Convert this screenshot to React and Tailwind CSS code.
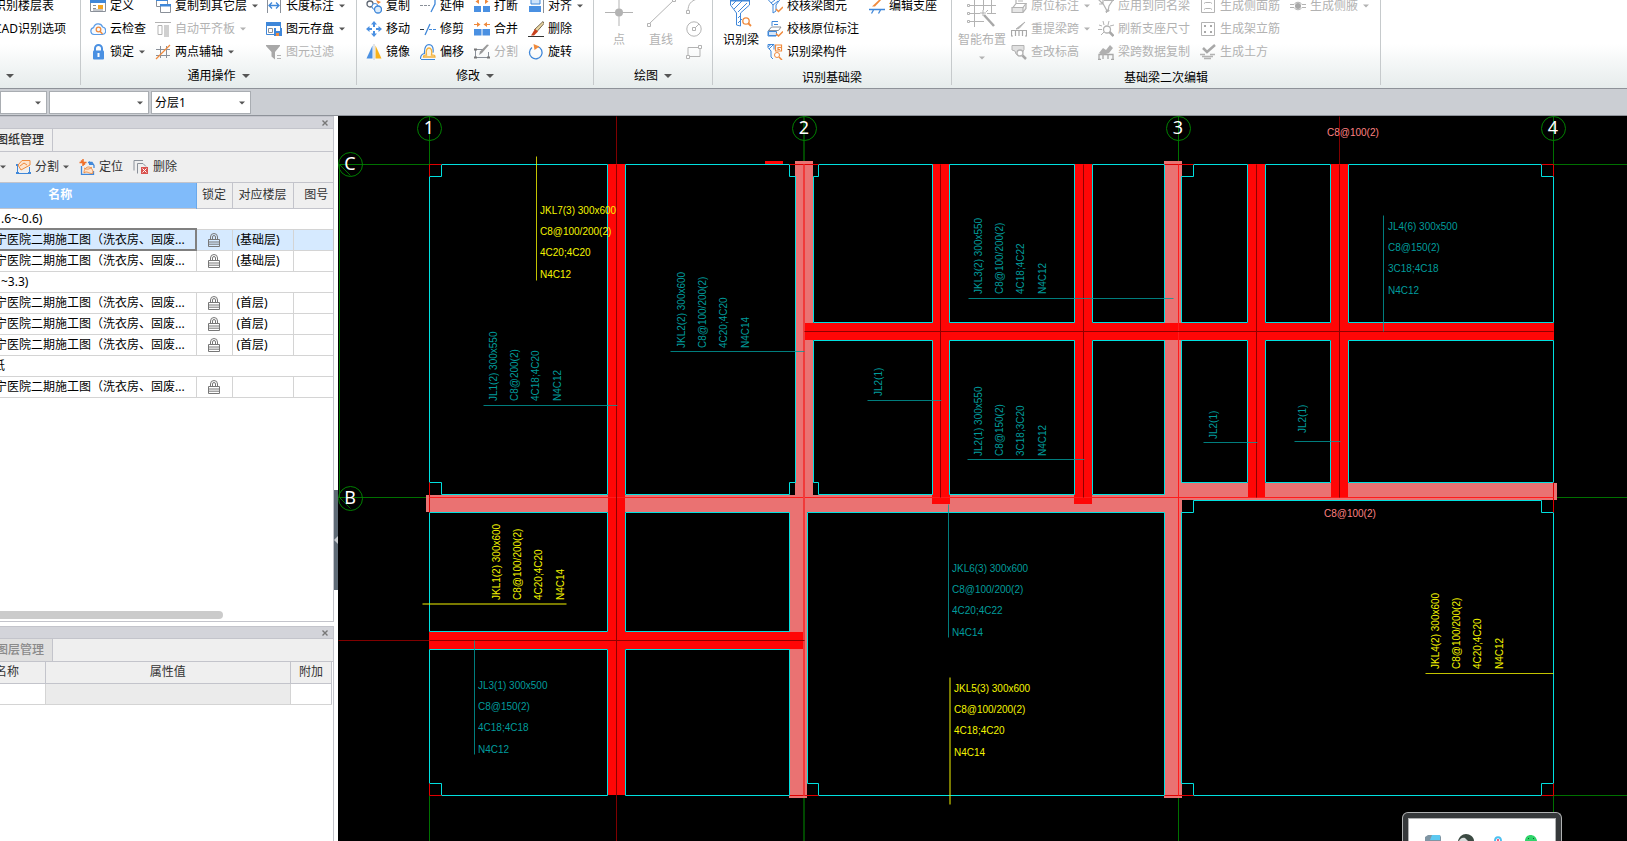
import React from 'react';
import clsx from 'clsx';

const BLUE = '#3f87d9';
const ORANGE = '#f08a3c';
const GRAY = '#b3b3b3';
const SLATE = '#8a9099';

/* ---------- icons ---------- */

const ICONS = {
  define: (
    <>
      <path d="M.5 1.5h15v12H.5z" fill="#fff" stroke={SLATE} />
      <path d="M0 1h16v4H0z" fill={BLUE} />
      <path d="M8 7h5v4H8z" fill="#f5a623" />
      <path d="M3 7.5h3M3 10.5h3M3 12h10" stroke={SLATE} />
    </>
  ),
  cloud: (
    <>
      <path d="M4 13.5a3.5 3.5 0 0 1-.4-6.9A4.7 4.7 0 0 1 12.6 6 3.8 3.8 0 0 1 12.5 13.5z" fill="#f5faff" stroke="#5a9be6" strokeWidth="1.2" />
      <circle cx="8.5" cy="8.5" r="2.3" fill="none" stroke={ORANGE} strokeWidth="1.3" />
      <path d="M10 10.3l2.5 2.7" stroke={ORANGE} strokeWidth="1.5" />
    </>
  ),
  lock: (
    <>
      <path d="M5 7V4.5a3.5 3.5 0 0 1 7 0V7" fill="none" stroke="#4a90e2" strokeWidth="2" />
      <rect x="3" y="6.5" width="11" height="9" rx="1" fill="#4a90e2" />
      <path d="M8.5 9v4" stroke="#fff" strokeWidth="2" />
    </>
  ),
  copyLayer: (
    <>
      <path d="M1.5 1.5h11v7h-11z" fill="#fff" stroke={SLATE} />
      <path d="M1 1h12v2H1z" fill={BLUE} />
      <path d="M5.5 6.5h10v8h-10z" fill="#fff" stroke={SLATE} />
      <path d="M5 6h11v2.500H5z" fill={BLUE} />
    </>
  ),
  flatSlab: (
    <>
      <path d="M0 1.5h16" stroke={GRAY} />
      <path d="M3 4.5h4v9H3z" fill="none" stroke={GRAY} />
      <path d="M9 4h5v12H9z" fill="#d0d0d0" />
    </>
  ),
  auxAxis: (
    <>
      <path d="M5.5 2v12M11.5 2v12M1 5.5h14M1 11.5h14" stroke={SLATE} />
      <path d="M1 15L15 1" stroke={ORANGE} strokeWidth="1.3" />
    </>
  ),
  length: (
    <>
      <path d="M1.5 0v15M14.5 0v15" stroke={SLATE} />
      <path d="M3 7.5h10M6 4.5l-3 3 3 3M10 4.5l3 3-3 3" fill="none" stroke={BLUE} strokeWidth="1.3" />
    </>
  ),
  store: (
    <>
      <path d="M.5 2.5h14v11H.5z" fill="#fff" stroke={BLUE} />
      <path d="M0 1h15v4H0z" fill={BLUE} />
      <path d="M2.5 7.5h4v4h-4z" fill="none" stroke={SLATE} />
      <path d="M8 7h8v8H8z" fill={BLUE} />
      <path d="M10 7h4v3h-4z" fill="#fff" />
      <path d="M10 12h3v3h-3z" fill={ORANGE} />
    </>
  ),
  filter: (
    <>
      <path d="M0 1h14v1L9 8v7.500L5.500 12.500V8L0 2z" fill="#a8a8a8" />
      <path d="M11 11.5h4M11 14.5h4" stroke={GRAY} />
    </>
  ),
  copy: (
    <>
      <circle cx="4" cy="6" r="3" fill="#fff" stroke="#5b6470" strokeWidth="1.3" />
      <circle cx="9" cy="8.5" r="3" fill="#fff" stroke={BLUE} />
      <circle cx="12" cy="11.5" r="3.5" fill="#dcecfb" stroke={BLUE} strokeWidth="1.3" />
      <path d="M10 2l5 2-3 2" fill={ORANGE} />
    </>
  ),
  move: (
    <path d="M8 0l3 3.500H9V6H7V3.500H5zM8 16l3-3.500H9V10H7v2.500H5zM0 8l3.500-3v2H6v2H3.500v2zM16 8l-3.500-3v2H10v2h2.500v2z" fill="#4a90e2" />
  ),
  mirror: (
    <>
      <path d="M6.5 1.5v13H.5z" fill="#4a90e2" />
      <path d="M9.5 1.5v13h6z" fill="#f7b21b" />
      <path d="M8 0v16" stroke="#c8ccd2" />
    </>
  ),
  extend: (
    <>
      <path d="M0 7.5h10" stroke={SLATE} strokeDasharray="3 1" />
      <path d="M15 0v6l-4 8" fill="none" stroke={BLUE} strokeWidth="1.3" />
    </>
  ),
  trim: (
    <>
      <path d="M0 8.5h4" stroke="#2b3a4a" />
      <path d="M10 3L5 14" stroke={BLUE} strokeWidth="1.3" />
      <path d="M9 8.5h7" stroke={BLUE} strokeDasharray="3 1" />
    </>
  ),
  offset: (
    <>
      <path d="M1 15.5h14M.5 15c0-3 .5-5 4-5.500C4 2 7 .7 9 .7s5 1.300 4 8" fill="none" stroke={BLUE} strokeWidth="1.2" />
      <path d="M3.5 13c0-2 1-2 3-2C5.500 6.500 7 4 9 4s3.500 2.500 2.500 7c2.500 0 3.500 0 3.500 2z" fill="#fff4dd" stroke="#f2b13c" strokeWidth="1.3" />
    </>
  ),
  breakBar: (
    <>
      <path d="M0 8h7v6H0zM9 8h7v6H9z" fill="#4a90e2" />
      <path d="M5 1L1.500 3.500 5 6zM11 1l3.500 2.500L11 6z" fill={ORANGE} />
    </>
  ),
  merge: (
    <>
      <path d="M0 8h7.500v6.500H0zM8.500 8H16v6.500H8.500z" fill="#4a90e2" />
      <path d="M3 1l3.500 2.500L3 6zM13 1L9.500 3.500 13 6zM0 3h3v1H0zM13 3h3v1h-3z" fill={ORANGE} />
    </>
  ),
  split: (
    <>
      <path d="M1.5 5.5h8M1.5 5v8.500h13V8" fill="none" stroke={SLATE} />
      <path d="M0 5.5h3M0 13.5h3M13 13.5h3" stroke="#777" strokeWidth="2" />
      <path d="M15 1L8 9l-3 2 1-3.500L13 .5z" fill="#9a9a9a" />
    </>
  ),
  align: (
    <>
      <path d="M3 1h9v5H3z" fill="#cfe3fa" stroke={BLUE} />
      <path d="M1 8h12v6H1z" fill="#4a90e2" />
      <path d="M15.5 0v15" stroke={SLATE} />
    </>
  ),
  erase: (
    <>
      <path d="M0 15.5h16" stroke="#333" />
      <path d="M15 .5l1 2-7 8-2.500-2z" fill="#e9d5a0" stroke="#5a4a32" strokeWidth=".8" />
      <path d="M7 8l3 2.500-4 4H3z" fill="#c8401c" />
    </>
  ),
  rotate: (
    <>
      <path d="M9.5 2.5a6.3 6.3 0 1 1-5.500 1" fill="none" stroke={BLUE} strokeWidth="1.3" />
      <path d="M5.5 0l6 2.500-5 3.500z" fill={ORANGE} />
    </>
  ),
  checkBeam: (
    <>
      <path d="M1 1.5h12L9 7v6l-3 2V7z" fill="#fff" stroke={BLUE} />
      <path d="M4 5l4-3M6 7l5-4" stroke={BLUE} />
      <path d="M9 11l2.500 2.500L16 9" fill="none" stroke={ORANGE} strokeWidth="1.5" />
    </>
  ),
  checkLabel: (
    <>
      <path d="M5 5V.5h6M7 3.5h4M5 6l-4 4v5h8" fill="none" stroke={BLUE} />
      <path d="M1.5 9.5h10L14 6H4.500z" fill="#fff" stroke={SLATE} />
      <path d="M1.5 10.5h8v4h-8z" fill="#d8e8fb" stroke={BLUE} />
      <path d="M9 12.5l2.500 2.500L16 10.500" fill="none" stroke={ORANGE} strokeWidth="1.5" />
    </>
  ),
  recogPart: (
    <>
      <path d="M1 .5h6v5M1 .5v3l3 3.500v6l2 2" fill="none" stroke={BLUE} />
      <path d="M1 3l3-2.500M2 5l4-4" stroke={BLUE} />
      <path d="M8.5 1v6h6V1zM14 3.5h-3v2h2" fill="none" stroke={ORANGE} strokeWidth="1.2" />
      <circle cx="10" cy="11" r="2.5" fill="#fff" stroke={ORANGE} />
      <path d="M12 13l3 3" stroke={ORANGE} strokeWidth="1.5" />
    </>
  ),
  support: (
    <>
      <path d="M0 11.5h16M4.5 12l-2 3.500M11.5 12l-2 3.500" stroke={BLUE} strokeWidth="1.3" />
      <path d="M14 0L6 8.500H3L12 0z" fill={ORANGE} />
    </>
  ),
  printer: (
    <>
      <path d="M5 5V.5h7M7 3h5M2 9.5h10l3-4H5z" fill="none" stroke={GRAY} strokeWidth="1.2" />
      <path d="M1 9.5h11v5H1zM12 14.5l3-4v-5" fill="#e6e6e6" stroke={GRAY} strokeWidth="1.2" />
    </>
  ),
  respan: (
    <>
      <path d="M.5 15V9.500h15V15M4.5 10v5M8 10v5M11.5 10v5M0 15h2M14 15h2" fill="none" stroke="#a8a8a8" strokeWidth="1.2" />
      <path d="M14 1L8 7.500 5 8z" fill={GRAY} stroke={GRAY} />
    </>
  ),
  height: (
    <>
      <path d="M1 1.5h12v4L11 9l-3 3-3-2-1-3-3-1z" fill="#e0e0e0" stroke={GRAY} />
      <circle cx="9" cy="9" r="3" fill="#fff" stroke={GRAY} strokeWidth="1.3" />
      <path d="M11.5 11.5l3.500 3.500" stroke="#a8a8a8" strokeWidth="2.5" />
    </>
  ),
  applyBeam: (
    <>
      <path d="M0 1l5 5M5 2v4H1M5 5.5L8.500 12V15M15 2l-4 6-1 5-2-1M6 2.5h10" fill="none" stroke={GRAY} strokeWidth="1.2" />
      <path d="M7 14l3-3 2 2z" fill={GRAY} />
    </>
  ),
  refresh: (
    <>
      <circle cx="9" cy="8.5" r="3.5" fill="#fff" stroke={GRAY} strokeWidth="1.3" />
      <path d="M11.5 11l4 4" stroke="#a8a8a8" strokeWidth="2.5" />
      <path d="M5 0l1 4M11 0l-1 4M0 8.5h4M3 14l3-3M12 5l4-1M1 4l3 1" stroke={GRAY} />
    </>
  ),
  spanCopy: (
    <>
      <path d="M1 15.5V10.500h14v5M5 11v4M10 11v4M0 15.5h3M13 15.5h3" fill="none" stroke="#a8a8a8" strokeWidth="1.3" />
      <path d="M1 9l4-5 3 2 4-5 3 3-4 5-3 1-4 1z" fill="#b0b0b0" />
    </>
  ),
  sideBar: (
    <>
      <path d="M1.5 1.5h13v13h-13z" fill="none" stroke={GRAY} />
      <path d="M4 5.5l1.500-1h5l1.500 1M4 11.5l1.500-1h5l1.500 1" fill="none" stroke={GRAY} />
    </>
  ),
  frameBar: (
    <>
      <path d="M1.5 1.5h13v13h-13z" fill="none" stroke={GRAY} />
      <path d="M4 4h2v2H4zM10 4h2v2h-2zM4 10h2v2H4zM10 10h2v2h-2z" fill="#a8a8a8" />
    </>
  ),
  earth: (
    <>
      <path d="M3 4l4 4 8-7" fill="none" stroke="#a8a8a8" strokeWidth="2.5" />
      <path d="M0 10.5h5M10 10.5h5M2 12.5h11M4 14.5h7" stroke={GRAY} strokeWidth="1.3" />
    </>
  ),
  haunch: (
    <>
      <path d="M0 6.5h4M12 6.5h4M0 9.5h4M12 9.5h4M4 6.5c2-3 6-3 8 0M4 9.5c2 3 6 3 8 0" fill="none" stroke={GRAY} />
      <circle cx="8" cy="8" r="3" fill="#a8a8a8" />
    </>
  ),
  drawingSplit: (
    <>
      <path d="M2.5 5v9.500h12V8" fill="none" stroke={BLUE} />
      <path d="M1 5h3v2H1zM1 13h3v2H1zM13 13h3v2h-3z" fill={BLUE} />
      <path d="M3 6l4-4.500h8V6L6 11zM5 7l4-3 3 2" fill="#fde3cd" stroke={ORANGE} />
    </>
  ),
  locate: (
    <>
      <path d="M9 3.5h4l2 3V9M2.5 7v8.500h12V12" fill="none" stroke={BLUE} strokeWidth="1.3" />
      <path d="M10 2l5 4h-5z" fill={BLUE} />
      <path d="M4 0v7M.5 3.5h7M2 1.5l4 4" stroke="#f0702a" strokeWidth="1.5" />
      <path d="M5 14c0-8 9-8 9 0-3 2-6-3-9 0zM5 9c3 2 6 1 8-1" fill="#fde3cd" stroke={ORANGE} />
    </>
  ),
  remove: (
    <>
      <path d="M1 11.5V1.500h9M4.5 14.5V4.500H10l3 3" fill="none" stroke={SLATE} />
      <path d="M8 8h7v7H8z" fill="#d9534f" />
      <path d="M9.5 9.5l4 4M13.5 9.5l-4 4" stroke="#fff" />
    </>
  ),
};

function Icon({ name }) {
  return (
    <svg viewBox="0 0 16 16" className="h-4 w-4 shrink-0" aria-hidden="true">
      {ICONS[name]}
    </svg>
  );
}

function Caret({ className = 'text-[#555]', big = false }) {
  return (
    <svg viewBox="0 0 8 4" className={clsx('h-1 shrink-0', big ? 'w-2' : 'w-1.5', className)} aria-hidden="true">
      <path d="M0 0h8L4 4z" fill="currentColor" />
    </svg>
  );
}

function PadlockIcon() {
  return (
    <svg viewBox="0 0 12 14" className="mx-auto h-3.5 w-3" role="img" aria-label="locked">
      <path d="M2.5 6V4a3.5 3.5 0 0 1 7 0v2M4.5 6V4a1.5 1.5 0 0 1 3 0v2" fill="none" stroke="#777" />
      <path d="M.5 6.5h11v7H.5zM1 9h10M1 11.2h10" fill="none" stroke="#777" />
    </svg>
  );
}

/* ---------- ribbon ---------- */

function Tool({ icon, label, caret, off }) {
  return (
    <button
      type="button"
      disabled={off}
      className={clsx('flex h-[23px] items-center gap-1 whitespace-nowrap', off ? 'text-[#b2b2b2]' : 'text-black')}
    >
      {icon && <Icon name={icon} />}
      {label}
      {caret && <span className="pl-px"><Caret className={off ? 'text-[#b2b2b2]' : 'text-[#555]'} /></span>}
    </button>
  );
}

function ToolColumn({ tools, className }) {
  return (
    <div className={clsx('flex shrink-0 flex-col', className)}>
      {tools.map((t) => <Tool key={t.label} {...t} />)}
    </div>
  );
}

function BigTool({ label, off, caret, className, children }) {
  return (
    <button
      type="button"
      disabled={off}
      className={clsx('flex h-[69px] shrink-0 flex-col items-center gap-1 whitespace-nowrap pt-1', off ? 'text-[#b2b2b2]' : 'text-black', className)}
    >
      <svg viewBox="0 0 30 30" className="h-[30px] w-[30px] shrink-0" aria-hidden="true">{children}</svg>
      <span className="leading-4">{label}</span>
      {caret && <Caret className="mt-1 text-[#b2b2b2]" />}
    </button>
  );
}

function Group({ title, caret, className, children }) {
  return (
    <section className="flex shrink-0">
      <div className={clsx('flex flex-col', className)}>
        <div className="-mt-1.5 flex">{children}</div>
        <h2 className={clsx('flex h-[25px] items-center justify-center gap-1.5 whitespace-nowrap', !caret && 'pt-1')}>
          {title}
          {caret && <Caret big />}
        </h2>
      </div>
      <div className="h-[85px] w-px bg-[#c6cacc]" />
    </section>
  );
}

function Ribbon() {
  return (
    <header className="flex h-[89px] shrink-0 overflow-hidden border-b border-[#8e9299] bg-linear-to-b from-white from-50% to-[#e6ecec]">
      <Group className="w-20">
        <div className="flex w-20 flex-col">
          <div className="-ml-1.5"><Tool label="识别楼层表" /></div>
          <div className="-ml-1.5"><Tool label="CAD识别选项" /></div>
          <div className="h-[23px]" />
          <div className="-ml-3 flex h-[25px] items-center gap-1.5">作<Caret big /></div>
        </div>
      </Group>

      <Group title="通用操作" caret className="w-[275px]">
        <ToolColumn
          className="ml-[9px] w-[65px]"
          tools={[
            { icon: 'define', label: '定义' },
            { icon: 'cloud', label: '云检查' },
            { icon: 'lock', label: '锁定', caret: true },
          ]}
        />
        <ToolColumn
          className="w-[111px]"
          tools={[
            { icon: 'copyLayer', label: '复制到其它层', caret: true },
            { icon: 'flatSlab', label: '自动平齐板', caret: true, off: true },
            { icon: 'auxAxis', label: '两点辅轴', caret: true },
          ]}
        />
        <ToolColumn
          tools={[
            { icon: 'length', label: '长度标注', caret: true },
            { icon: 'store', label: '图元存盘', caret: true },
            { icon: 'filter', label: '图元过滤', off: true },
          ]}
        />
      </Group>

      <Group title="修改" caret className="w-[236px]">
        <ToolColumn
          className="ml-[9px] w-[54px]"
          tools={[
            { icon: 'copy', label: '复制' },
            { icon: 'move', label: '移动' },
            { icon: 'mirror', label: '镜像' },
          ]}
        />
        <ToolColumn
          className="w-[54px]"
          tools={[
            { icon: 'extend', label: '延伸' },
            { icon: 'trim', label: '修剪' },
            { icon: 'offset', label: '偏移' },
          ]}
        />
        <ToolColumn
          className="w-[54px]"
          tools={[
            { icon: 'breakBar', label: '打断' },
            { icon: 'merge', label: '合并' },
            { icon: 'split', label: '分割', off: true },
          ]}
        />
        <ToolColumn
          tools={[
            { icon: 'align', label: '对齐', caret: true },
            { icon: 'erase', label: '删除' },
            { icon: 'rotate', label: '旋转' },
          ]}
        />
      </Group>

      <Group title="绘图" caret className="w-[118px]">
        <BigTool label="点" off className="ml-2.5 w-[30px]">
          <path d="M15 0v28M1 14.5h28" stroke={GRAY} />
          <circle cx="15" cy="14.5" r="4" fill={GRAY} />
        </BigTool>
        <BigTool label="直线" off className="ml-2.5 w-[34px]">
          <path d="M3 26L28 2" stroke={GRAY} />
          <path d="M1.5 25.5h3v3h-3zM26.5.5h3v3h-3z" fill="#fff" stroke={GRAY} />
        </BigTool>
        <div className="ml-2 flex w-4 flex-col">
          <button type="button" disabled aria-label="arc" className="flex h-[23px] items-center">
            <svg viewBox="0 0 16 16" className="h-4 w-4">
              <path d="M2 13C2 6 5 3 11 1" fill="none" stroke={GRAY} />
              <path d="M.5 12.5h3v3h-3z" fill="#fff" stroke={GRAY} />
            </svg>
          </button>
          <button type="button" disabled aria-label="circle" className="flex h-[23px] items-center">
            <svg viewBox="0 0 16 16" className="h-4 w-4">
              <circle cx="8" cy="8" r="7.2" fill="none" stroke={GRAY} />
              <path d="M8 8l5-5" stroke={GRAY} />
              <path d="M6.5 6.5h3v3h-3z" fill="#fff" stroke={GRAY} />
            </svg>
          </button>
          <button type="button" disabled aria-label="rectangle" className="flex h-[23px] items-center">
            <svg viewBox="0 0 16 16" className="h-4 w-4">
              <path d="M2 3.5h12v9H2z" fill="none" stroke={GRAY} />
              <path d="M.5 11.5h3v3h-3zM12.5 1.5h3v3h-3z" fill="#fff" stroke={GRAY} />
            </svg>
          </button>
        </div>
      </Group>

      <Group title="识别基础梁" className="w-[238px]">
        <BigTool label="识别梁" className="ml-2.5 w-9">
          <path d="M4.5 3v4l6 8v12l4 1V15l9-8V3z" fill="#fff" stroke={BLUE} />
          <path d="M4 2.5h20M6 7l4-4M8 11l8-8M12 14l9-9M12 20l3-3M12 25l4-4" stroke={BLUE} />
          <circle cx="20" cy="23" r="3.2" fill="#fff" stroke={ORANGE} strokeWidth="1.3" />
          <path d="M22 25l3 3" stroke={ORANGE} strokeWidth="1.8" />
        </BigTool>
        <ToolColumn
          className="ml-2 w-[102px]"
          tools={[
            { icon: 'checkBeam', label: '校核梁图元' },
            { icon: 'checkLabel', label: '校核原位标注' },
            { icon: 'recogPart', label: '识别梁构件' },
          ]}
        />
        <ToolColumn tools={[{ icon: 'support', label: '编辑支座' }]} />
      </Group>

      <Group title="基础梁二次编辑" className="w-[428px]">
        <BigTool label="智能布置" off caret className="ml-1.5 w-12">
          <path d="M7.5 2v22M16.5 0v12M24.5 0v16M1 7.5h28M1 15.5h12M20 15.5h9M1 23.5h16M7.5 24v5" stroke={GRAY} />
          <path d="M17 17l10 11" stroke="#a8a8a8" strokeWidth="2.5" />
          <path d="M16 12v6M13 15h6M21 12l-2 2" stroke={GRAY} />
          <path d="M.5 6.5h2v2h-2zM.5 14.5h2v2h-2zM.5 22.5h2v2h-2z" fill="#fff" stroke={GRAY} />
        </BigTool>
        <ToolColumn
          className="ml-[5px] w-[87px]"
          tools={[
            { icon: 'printer', label: '原位标注', caret: true, off: true },
            { icon: 'respan', label: '重提梁跨', caret: true, off: true },
            { icon: 'height', label: '查改标高', off: true },
          ]}
        />
        <ToolColumn
          className="w-[102px]"
          tools={[
            { icon: 'applyBeam', label: '应用到同名梁', off: true },
            { icon: 'refresh', label: '刷新支座尺寸', off: true },
            { icon: 'spanCopy', label: '梁跨数据复制', off: true },
          ]}
        />
        <ToolColumn
          className="w-[90px]"
          tools={[
            { icon: 'sideBar', label: '生成侧面筋', off: true },
            { icon: 'frameBar', label: '生成架立筋', off: true },
            { icon: 'earth', label: '生成土方', off: true },
          ]}
        />
        <ToolColumn tools={[{ icon: 'haunch', label: '生成侧腋', caret: true, off: true }]} />
      </Group>
    </header>
  );
}

function Combo({ label, value, className }) {
  return (
    <label className={clsx('relative block h-[23px]', className)}>
      <select aria-label={label} defaultValue={value} className="h-full w-full appearance-none border border-[#a9adb2] bg-white pl-[3px] text-xs">
        <option value={value}>{value}</option>
      </select>
      <span className="pointer-events-none absolute inset-y-0 right-1.5 flex items-center"><Caret /></span>
    </label>
  );
}

/* ---------- left dock ---------- */

const DRAWING = '宁医院二期施工图（洗衣房、固废...';
const ROWS = [
  { group: '.6~-0.6)' },
  { floor: '(基础层)', selected: true },
  { floor: '(基础层)' },
  { group: '~3.3)' },
  { floor: '(首层)' },
  { floor: '(首层)' },
  { floor: '(首层)' },
  { group: '纸', shift: true },
  { floor: '' },
];

function DockTitle() {
  return (
    <div className="flex h-3 shrink-0 items-center justify-end border-b border-[#c3c4cb] bg-[#d3d4da] pr-[5px]">
      <button type="button" aria-label="close">
        <svg viewBox="0 0 6 6" className="h-1.5 w-1.5">
          <path d="M.5.5l5 5M5.5.5l-5 5" stroke="#777" strokeWidth="1.4" />
        </svg>
      </button>
    </div>
  );
}

function DrawingTable() {
  return (
    <table className="w-full table-fixed border-collapse">
      <colgroup>
        <col />
        <col className="w-9" />
        <col className="w-[61px]" />
        <col className="w-10" />
      </colgroup>
      <thead>
        <tr className="h-[25px] border-b border-[#c3c4cb] bg-[#efefef] text-[#333]">
          <th className="border-r border-[#6aa9ec] bg-[#80bbfa] pr-16 font-bold text-white">名称</th>
          <th className="border-r border-[#c3c4cb] font-normal">锁定</th>
          <th className="border-r border-[#c3c4cb] font-normal">对应楼层</th>
          <th className="pl-1.5 font-normal">图号</th>
        </tr>
      </thead>
      <tbody>
        {ROWS.map((row, i) =>
          row.group ? (
            <tr key={i} className="h-[21px] border-b border-[#d4d4d4]">
              <td colSpan={4} className={row.shift ? 'pl-1' : 'pl-3'}>{row.group}</td>
            </tr>
          ) : (
            <tr key={i} className={clsx('h-[21px] border-b border-[#d4d4d4]', row.selected && 'bg-[#d6eaff]')}>
              <td className={clsx('overflow-hidden border-r border-[#d4d4d4] pl-1.5 whitespace-nowrap', row.selected && 'outline-2 -outline-offset-1 outline-[#808080]')}>
                {DRAWING}
              </td>
              <td className="border-r border-[#d4d4d4]"><PadlockIcon /></td>
              <td className="border-r border-[#d4d4d4] pl-1">{row.floor}</td>
              <td />
            </tr>
          )
        )}
      </tbody>
    </table>
  );
}

function LeftDock() {
  return (
    <aside className="-ml-3 flex w-[346px] shrink-0 flex-col text-xs leading-4">
      <section className="flex min-h-0 flex-1 flex-col border border-[#c3c4cb] bg-white">
        <DockTitle />
        <div className="flex h-[23px] shrink-0 border-b border-[#c3c4cb] bg-[#efefef]">
          <button type="button" className="w-16 border-r border-[#c3c4cb] pl-[7px] text-left font-medium whitespace-nowrap text-[#333]">图纸管理</button>
        </div>
        <div className="flex h-[31px] shrink-0 items-center border-b border-[#c3c4cb] bg-[#efefef] pl-[11px] text-[#333]">
          <button type="button" aria-label="more" className="w-[15px]"><Caret /></button>
          <button type="button" className="flex w-16 items-center gap-1"><Icon name="drawingSplit" />分割<Caret /></button>
          <button type="button" className="flex w-[54px] items-center gap-1"><Icon name="locate" />定位</button>
          <button type="button" className="flex items-center gap-1"><Icon name="remove" />删除</button>
        </div>
        <DrawingTable />
        <div className="mt-auto mb-0.5 h-2 w-[234px] rounded-r-full bg-[#cbcbcb]" />
      </section>

      <section className="mt-1 h-[215px] shrink-0 border border-b-0 border-[#c3c4cb] bg-white">
        <DockTitle />
        <div className="flex h-[23px] border-b border-[#c3c4cb] bg-[#efefef]">
          <button type="button" className="w-16 border-r border-[#c3c4cb] bg-[#e0e0e0] pl-[7px] text-left font-medium whitespace-nowrap text-[#8a8a8a]">图层管理</button>
        </div>
        <table className="w-[343px] table-fixed border-collapse border-r border-[#c3c4cb]">
          <thead>
            <tr className="h-[21px] border-b border-[#c3c4cb] bg-[#efefef] text-[#333]">
              <th className="w-14 border-r border-[#c3c4cb] pl-1.5 text-left font-normal">名称</th>
              <th className="border-r border-[#c3c4cb] font-normal">属性值</th>
              <th className="w-[41px] font-normal">附加</th>
            </tr>
          </thead>
          <tbody>
            <tr className="h-[21px] border-b border-[#d4d4d4]">
              <td className="border-r border-[#d4d4d4]" />
              <td className="border-r border-[#d4d4d4] bg-[#ebebeb]" />
              <td />
            </tr>
          </tbody>
        </table>
      </section>
    </aside>
  );
}

/* ---------- model view ---------- */

const CYAN = '#00e0e0';
const TEAL = '#009c9c';
const YELLOW = '#f4f400';
const PINK = '#ea7272';

// x, y, w, h
const PINK_BEAMS = [
  [426, 495, 756, 17],
  [1178, 483, 379, 17],
  [795, 161, 18, 334],
  [789, 512, 18, 286],
  [1164, 161, 18, 637],
];

const RED_BEAMS = [
  [608, 164, 17, 631],
  [429, 632, 375, 17],
  [804, 323, 750, 17],
  [932, 164, 18, 340],
  [1074, 164, 18, 340],
  [1248, 164, 17, 333],
  [1331, 164, 17, 333],
  [765, 161, 18, 3],
];

const ROOMS = [
  '441,164 607,164 607,494 441,494 441,482 429,482 429,176 441,176',
  '625,164 789,164 789,176 795,176 795,482 789,482 789,494 625,494',
  '818,164 932,164 932,322 813,322 813,176 818,176',
  '813,340 932,340 932,494 818,494 818,482 813,482',
  '949,164 1074,164 1074,322 949,322',
  '949,340 1074,340 1074,494 949,494',
  '1092,164 1164,164 1164,322 1092,322',
  '1092,340 1164,340 1164,494 1092,494',
  '1193,164 1247,164 1247,322 1181,322 1181,176 1193,176',
  '1181,340 1247,340 1247,482 1181,482',
  '1265,164 1330,164 1330,322 1265,322',
  '1265,340 1330,340 1330,482 1265,482',
  '1348,164 1541,164 1541,176 1553,176 1553,322 1348,322',
  '1348,340 1553,340 1553,482 1348,482',
  '429,512 607,512 607,631 429,631',
  '625,512 789,512 789,631 625,631',
  '429,649 607,649 607,795 441,795 441,783 429,783',
  '625,649 789,649 789,795 625,795',
  '807,512 1164,512 1164,795 818,795 818,783 807,783',
  '1193,500 1541,500 1541,512 1553,512 1553,783 1541,783 1541,795 1193,795 1193,783 1181,783 1181,512 1193,512',
];

const LINE_OFFSETS = [0, 21, 42, 64];

// x, y: centre line and start of the first text line
const NOTES = [
  { x: 540, y: 210, color: YELLOW, leader: 'M536 156V280', lines: ['JKL7(3) 300x600', 'C8@100/200(2)', '4C20;4C20', 'N4C12'] },
  { x: 1388, y: 226, color: TEAL, leader: 'M1383 215V331', lines: ['JL4(6) 300x500', 'C8@150(2)', '3C18;4C18', 'N4C12'] },
  { x: 478, y: 685, color: TEAL, leader: 'M474 640V754', lines: ['JL3(1) 300x500', 'C8@150(2)', '4C18;4C18', 'N4C12'] },
  { x: 952, y: 568, color: TEAL, leader: 'M948 504V637', lines: ['JKL6(3) 300x600', 'C8@100/200(2)', '4C20;4C22', 'N4C14'] },
  { x: 954, y: 688, color: YELLOW, wide: true, leader: 'M949.5 677V804', lines: ['JKL5(3) 300x600', 'C8@100/200(2)', '4C18;4C20', 'N4C14'] },
  { x: 1327, y: 132, color: '#ff8080', lines: ['C8@100(2)'] },
  { x: 1324, y: 513, color: '#ff8080', lines: ['C8@100(2)'] },
  { up: true, x: 493, y: 401, color: TEAL, leader: 'M483 405H617', lines: ['JL1(2) 300x550', 'C8@200(2)', '4C18;4C20', 'N4C12'] },
  { up: true, x: 681, y: 348, color: TEAL, leader: 'M670 351H804', lines: ['JKL2(2) 300x600', 'C8@100/200(2)', '4C20;4C20', 'N4C14'] },
  { up: true, x: 978, y: 294, color: TEAL, leader: 'M968 298H1173', lines: ['JKL3(2) 300x550', 'C8@100/200(2)', '4C18;4C22', 'N4C12'] },
  { up: true, x: 978, y: 456, color: TEAL, leader: 'M967 459H1084', lines: ['JL2(1) 300x550', 'C8@150(2)', '3C18;3C20', 'N4C12'] },
  { up: true, x: 878, y: 396, color: TEAL, leader: 'M867 400H941', lines: ['JL2(1)'] },
  { up: true, x: 1213, y: 439, color: TEAL, leader: 'M1203 442H1257', lines: ['JL2(1)'] },
  { up: true, x: 1302, y: 433, color: TEAL, leader: 'M1294 441H1340', lines: ['JL2(1)'] },
  { up: true, x: 496, y: 600, color: YELLOW, wide: true, leader: 'M422 603.5H566', lines: ['JKL1(2) 300x600', 'C8@100/200(2)', '4C20;4C20', 'N4C14'] },
  { up: true, x: 1435, y: 669, color: YELLOW, leader: 'M1425 673H1553', lines: ['JKL4(2) 300x600', 'C8@100/200(2)', '4C20;4C20', 'N4C12'] },
];

const AXES = [
  { name: '1', x: 429, y: 128 },
  { name: '2', x: 804, y: 128 },
  { name: '3', x: 1178, y: 128 },
  { name: '4', x: 1553, y: 128 },
  { name: 'C', x: 350, y: 164 },
  { name: 'B', x: 350, y: 498 },
];

function Note({ x, y, up, color, wide, leader, lines }) {
  return (
    <g>
      {leader && (
        <path
          d={leader}
          fill="none"
          stroke={color}
          strokeOpacity={wide ? 0.5 : 0.8}
          strokeWidth={wide ? 2 : 1}
          transform="translate(.5 .5)"
        />
      )}
      {lines.map((line, i) => {
        const tx = up ? x + LINE_OFFSETS[i] + 4 : x;
        const ty = up ? y : y + LINE_OFFSETS[i] + 4;
        return (
          <text
            key={i}
            x={tx}
            y={ty}
            fill={color}
            transform={up ? `rotate(-90 ${tx} ${ty})` : undefined}
            className="font-['Liberation_Sans',sans-serif] text-[10px]"
          >
            {line}
          </text>
        );
      })}
    </g>
  );
}

function ModelView() {
  return (
    <main className="relative min-w-0 flex-1 overflow-hidden bg-black">
      <svg viewBox="338 116 1289 725" width="1289" height="725" className="block max-w-none" role="img" aria-label="foundation beam plan">
        {/* axis grid */}
        <g fill="none" stroke="#007000" transform="translate(.5 .5)">
          <path d="M429 116V164M1178 116V164M1553 116V164M429 795V841M1178 795V841M1553 795V841M339 164V497M339 164L350 175M339 497L350 508" />
          <path d="M338 164H429M338 497H429M1553 164H1627M1553 497H1627M1553 795H1627" />
          <path d="M803.5 116V164M803.5 795V841" stroke="#004800" strokeWidth="2" />
          <path d="M616 116V164M616 795V841M1339 116V164M338 640H429" stroke="#800000" />
          {AXES.map((a) => <circle key={a.name} cx={a.x} cy={a.y} r="12" stroke="#008000" />)}
        </g>

        {/* beams */}
        <g shapeRendering="crispEdges">
          {PINK_BEAMS.map(([x, y, w, h]) => <rect key={`${x}-${y}`} x={x} y={y} width={w} height={h} fill={PINK} />)}
          {RED_BEAMS.map(([x, y, w, h]) => <rect key={`${x}-${y}`} x={x} y={y} width={w} height={h} fill="#ff0606" />)}
        </g>

        <g fill="none" transform="translate(.5 .5)">
          {ROOMS.map((pts) => <polygon key={pts} points={pts} stroke={CYAN} />)}
          {/* columns and centre lines */}
          <path d="M429 176V164H441M789 164H818M1164 164H1193M1541 164H1553V176M429 482V512M1553 482V512M429 783V795H441M789 795H818M1164 795H1193M1541 795H1553V783" stroke="#e00000" />
          <path d="M429 497H1553M1178 164V795" stroke="#ff1c1c" />
          <path d="M803.5 164V795" stroke="#f03a3a" strokeWidth="2" />
          <path d="M616 164V795M429 640H804M804 331H1553M940 164V497M1083 164V497M1256 164V497M1339 164V497" stroke="#900000" />
        </g>

        {NOTES.map((n) => <Note key={`${n.x}-${n.y}`} {...n} />)}

        {AXES.map((a) => (
          <text key={a.name} x={a.x} y={a.y + 6} textAnchor="middle" fill="#fff" className="font-['Noto_Sans',sans-serif] text-[18px]">
            {a.name}
          </text>
        ))}
      </svg>

      {/* tray flyout */}
      <div className="absolute right-[65px] bottom-0 h-[29px] w-40 rounded-t-md border border-b-0 border-[#b0b2b3] bg-[#36393b] px-[5px] pt-[5px]">
        <div className="flex h-full items-end justify-around border border-b-0 border-[#b0b2b3] bg-white px-2">
          <svg viewBox="0 0 16 6" className="h-1.5 w-4"><path d="M0 2l3-2h12l1 2v4H0z" fill="#7f95a3" /><path d="M7 0h8v5H5z" fill="#5cc8f0" /></svg>
          <svg viewBox="0 0 16 7" className="h-[7px] w-4"><path d="M0 7c1-4 4-7 8-7s8 3 8 7z" fill="#3b4a42" /><path d="M1 7c1-2 3-4 6-3l3 3z" fill="#d8dcdc" /></svg>
          <svg viewBox="0 0 16 6" className="h-1.5 w-4"><path d="M5 6c0-5 6-5 6 0" fill="none" stroke="#4cc0f0" strokeWidth="2" /><path d="M7 4h2v2H7z" fill="#f06080" /></svg>
          <svg viewBox="0 0 16 6" className="h-1.5 w-4"><path d="M2 6c0-8 11-8 12 0z" fill="#2fd46a" /><path d="M5 3h1v1H5zM10 3h1v1h-1z" fill="#145c30" /></svg>
        </div>
      </div>
    </main>
  );
}

export default function App() {
  return (
    <div className="flex h-screen flex-col overflow-hidden bg-white font-['Noto_Sans','Noto_Sans_CJK_SC',sans-serif] text-xs text-black">
      <Ribbon />
      <div className="flex h-[27px] shrink-0 gap-0.5 border-b border-[#8e9299] bg-[#cbced3] pt-0.5">
        <Combo label="floor" value="" className="w-[47px]" />
        <Combo label="category" value="" className="w-[100px]" />
        <Combo label="layer" value="分层1" className="w-[100px]" />
      </div>
      <div className="flex min-h-0 flex-1">
        <LeftDock />
        <div className="flex w-1 shrink-0 items-center bg-white pt-[122px]">
          <button type="button" aria-label="collapse panel" className="flex h-[100px] w-1 items-center bg-[#5f6b76]">
            <svg viewBox="0 0 4 8" className="h-2 w-1"><path d="M4 0v8L0 4z" fill="#c8ccd0" /></svg>
          </button>
        </div>
        <ModelView />
      </div>
    </div>
  );
}
